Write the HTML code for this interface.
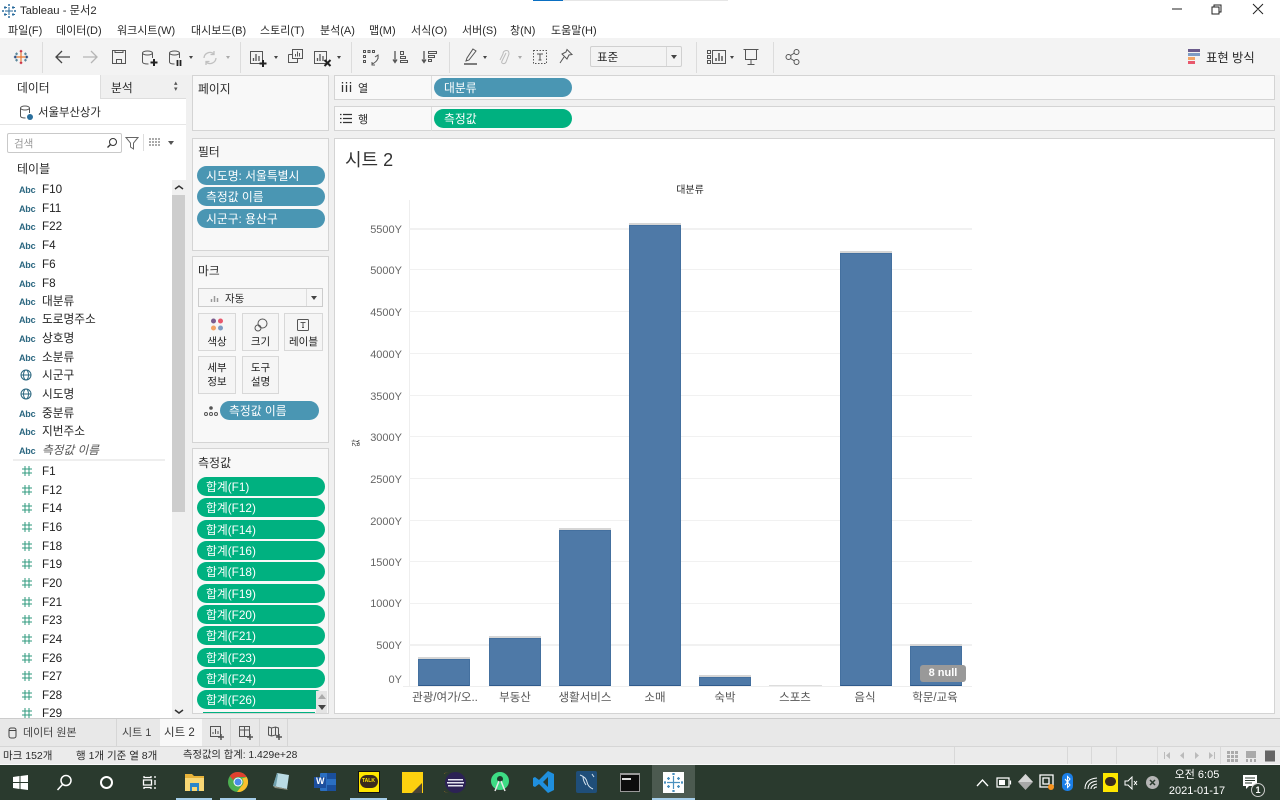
<!DOCTYPE html>
<html lang="ko"><head><meta charset="utf-8"><title>Tableau - 문서2</title>
<style>
html,body{margin:0;padding:0;width:1280px;height:800px;overflow:hidden;background:#f0f0f0;font-family:"Liberation Sans","Noto Sans CJK KR","NanumGothic",sans-serif;font-size:11px;color:#2a2a2a}
.b,.t,.p,svg.i{position:absolute}
.t{white-space:nowrap;line-height:14px;margin-top:1px}
.c{border:1px solid #d4d4d4;box-sizing:border-box;position:absolute}
.p{height:19px;border-radius:10px;color:#fff;line-height:20px;padding-left:9px;box-sizing:border-box;white-space:nowrap;font-size:11.8px}
.bl{background:#4a96b3}.gr{background:#00b180}
.f{left:42px;font-size:11.7px;color:#222}
.a{left:19px;font-size:9px;font-weight:bold;color:#2b6780;letter-spacing:-.2px}
.mb{position:absolute;background:#f5f5f5;border:1px solid #d8d8d8;box-sizing:border-box;text-align:center;font-size:10.5px;line-height:14px;color:#222}
.y{right:878px;font-size:11px;color:#666}
.x{width:70px;text-align:center;font-size:11.5px;color:#555;top:690px}
.gl{position:absolute;left:409px;width:563px;height:1px;background:#f1f1f1}
.bar{position:absolute;width:52px;background:#4e79a7;border:1px solid #44709f;border-bottom-color:#2f5a8c;box-sizing:border-box;box-shadow:0 -2px 0 #d6d6d6}
svg.i{fill:none;stroke:#555;stroke-width:1}
svg.hs{left:21px;stroke:#2f9a7e}
.sp{position:absolute;top:42px;width:1px;height:31px;background:#dcdcdc}
.car{position:absolute;width:0;height:0;border-left:2.5px solid transparent;border-right:2.5px solid transparent;border-top:3px solid #444}
.hd{font-size:11.8px}
</style></head><body>

<!-- title -->
<div class="b" style="left:0;top:0;width:1280px;height:38px;background:#fff"></div>
<div class="b" style="left:533px;top:0;width:30px;height:1px;background:#0a6fc2"></div>
<div class="b" style="left:563px;top:0;width:165px;height:1px;background:#e6e6e6"></div>
<svg class="i" style="left:2px;top:4px;stroke:#2a6b9c" width="14" height="14"><path d="M7 3v8M3 7h8M7 0v2M6 1h2M7 12v2M6 13h2M0 7h2M1 6v2M12 7h2M13 6v2M3 2v3M2 3.500h3M11 2v3M10 3.500h3M3 9v3M2 10.500h3M11 9v3M10 10.500h3"/></svg>
<div class="t" style="left:20px;top:3px;font-size:11.3px">Tableau - 문서2</div>
<svg class="i" style="left:1170px;top:0;stroke:#222" width="104" height="18"><path d="M2 9h10M42 7h7v7h-7zM44 7V5h7v7h-2M83 4l10 10M93 4L83 14"/></svg>
<div class="t" style="left:8px;top:23px">파일(F)</div>
<div class="t" style="left:56px;top:23px">데이터(D)</div>
<div class="t" style="left:117px;top:23px">워크시트(W)</div>
<div class="t" style="left:191px;top:23px">대시보드(B)</div>
<div class="t" style="left:260px;top:23px">스토리(T)</div>
<div class="t" style="left:320px;top:23px">분석(A)</div>
<div class="t" style="left:369px;top:23px">맵(M)</div>
<div class="t" style="left:411px;top:23px">서식(O)</div>
<div class="t" style="left:462px;top:23px">서버(S)</div>
<div class="t" style="left:510px;top:23px">창(N)</div>
<div class="t" style="left:551px;top:23px">도움말(H)</div>

<!-- toolbar -->
<div class="b" style="left:0;top:38px;width:1280px;height:37px;background:#f3f3f3"></div>
<svg class="i" style="left:13px;top:49px;stroke-width:1.300" width="16" height="16" viewBox="0 0 18 18"><path d="M9 4v10M4 9h10" stroke="#e8762c"/><path d="M9 1v3M7.500 2.500h3M9 14v3M7.500 15.500h3" stroke="#c72035"/><path d="M1 9h3M2.500 7.500v3M14 9h3M15.500 7.500v3" stroke="#1f447a"/><path d="M4 4v3M2.500 5.500h3M14 4v3M12.500 5.500h3M4 11v3M2.500 12.500h3M14 11v3M12.500 12.500h3" stroke="#5b879b"/></svg>
<div class="sp" style="left:42px"></div><div class="sp" style="left:240px"></div><div class="sp" style="left:351px"></div><div class="sp" style="left:449px"></div><div class="sp" style="left:696px"></div><div class="sp" style="left:773px"></div>
<svg class="i" style="left:55px;top:50px;stroke-width:1.300;stroke:#444" width="15" height="14"><path d="M15 7H1M7 1L1 7l6 6"/></svg>
<svg class="i" style="left:83px;top:50px;stroke-width:1.300;stroke:#b5b5b5" width="15" height="14"><path d="M0 7h14M8 1l6 6-6 6"/></svg>
<svg class="i" style="left:112px;top:50px" width="15" height="15"><path d="M.5.500h13v13H.5zM3 .5v2h8v-2M4.500 13.500v-4h5v4"/></svg>
<svg class="i" style="left:141px;top:50px" width="17" height="17"><ellipse cx="6.500" cy="3" rx="5" ry="2"/><path d="M1.500 3v9q0 2 6 2M11.500 3v5"/><path d="M13 9v7M9.500 12.500h7" stroke="#222" stroke-width="2"/></svg>
<svg class="i" style="left:168px;top:50px" width="15" height="17"><ellipse cx="6.500" cy="3" rx="5" ry="2"/><path d="M1.500 3v9q0 2 5 2M11.500 3v5"/><path d="M9.500 10v6M12.500 10v6" stroke="#222" stroke-width="1.800"/></svg>
<div class="car" style="left:189px;top:56px"></div>
<svg class="i" style="left:202px;top:50px;stroke:#c0c0c0;stroke-width:1.300" width="16" height="16"><path d="M2 8a6 6 0 0 1 10-4M14 8a6 6 0 0 1-10 4M12 1v3.500H8.500M4 15v-3.500h3.500"/></svg>
<div class="car" style="left:226px;top:56px;border-top-color:#aaa"></div>
<svg class="i" style="left:250px;top:50px" width="18" height="17"><path d="M.5 1.500h12v12H.5z"/><path d="M3.500 11V8M6 11V4M9 11V6" stroke-width="1.300"/><path d="M13 10v7M9.500 13.500h7" stroke="#222" stroke-width="2"/></svg>
<div class="car" style="left:274px;top:56px"></div>
<svg class="i" style="left:288px;top:49px" width="15" height="15"><path d="M4.500.5h10v9h-10zM.5 5.500h4M.5 5.500v8h9v-4"/><path d="M7.500 7.500V5M9.500 7.500V2.500M11.500 7.500V4"/></svg>
<svg class="i" style="left:314px;top:50px" width="18" height="17"><path d="M.5 1.500h12v12H.5z"/><path d="M3.500 11V8M6 11V4M9 11V6" stroke-width="1.300"/><path d="M10.500 10l6 6M16.500 10l-6 6" stroke="#222" stroke-width="2"/></svg>
<div class="car" style="left:337px;top:56px"></div>
<svg class="i" style="left:363px;top:50px" width="17" height="16"><path d="M.5.500h2v2h-2zM5 .5h2v2H5zM9.500.5h2v2h-2zM.5 5.500h2v2h-2zM.5 10.500h2v2h-2zM15 5q1 6-6 9M15 9V5l-3 2M9 12v3h3"/></svg>
<svg class="i" style="left:392px;top:50px" width="17" height="15"><path d="M3 1v11M1 9.500l2 3 2-3" stroke-width="1.300"/><path d="M8.500 1.500h3v3h-3zM8.500 6.500h5v2h-5zM8.500 10.500h7v2h-7z"/></svg>
<svg class="i" style="left:421px;top:50px" width="17" height="15"><path d="M3 1v11M1 9.500l2 3 2-3" stroke-width="1.300"/><path d="M7.500 1.500h8v2h-8zM7.500 5.500h6v2h-6zM7.500 9.500h3v2h-3z"/></svg>
<svg class="i" style="left:463px;top:48px" width="15" height="18"><path d="M10 1l3 2-7 9-3 1 1-3z"/><path d="M1 16h13" stroke-width="1.500"/></svg>
<div class="car" style="left:483px;top:56px"></div>
<svg class="i" style="left:497px;top:49px;stroke:#bbb" width="13" height="16"><path d="M9 4L5 12q-1 2 1 2.500t3-1.500l3-8q0-4-3-3.500T6 5L3 11"/></svg>
<div class="car" style="left:518px;top:56px;border-top-color:#aaa"></div>
<svg class="i" style="left:532px;top:49px" width="16" height="16"><path d="M1.500 1.500h13v13h-13z" stroke-dasharray="1.500 1.500"/><path d="M5 5h6M8 5v6M6.500 11h3"/></svg>
<svg class="i" style="left:558px;top:48px" width="16" height="17"><path d="M9 1.500l5 5-3 .5-2 4-5-5 4-2zM6 9l-4 6"/></svg>
<div class="b" style="left:590px;top:46px;width:92px;height:21px;background:#f3f3f3;border:1px solid #d0d0d0;box-sizing:border-box;border-radius:2px"></div>
<div class="b" style="left:666px;top:47px;width:1px;height:19px;background:#d8d8d8"></div>
<div class="car" style="left:671px;top:55px;border-left-width:3.500px;border-right-width:3.500px;border-top-width:4px"></div>
<div class="t" style="left:597px;top:50px;font-size:11.500px">표준</div>
<svg class="i" style="left:707px;top:49px" width="20" height="16"><path d="M.5 1.500h3v3h-3zM.5 6.500h3v3h-3zM.5 11.500h3v3h-3zM5.500 1.500h13v13h-13z"/><path d="M9 12V9M12 12V4M15 12V7" stroke-width="1.500"/></svg>
<div class="car" style="left:730px;top:56px"></div>
<svg class="i" style="left:743px;top:48px" width="16" height="18"><path d="M.5 1.500h15M2.500 1.500v10h11v-10M8 11.500V16M4.500 16.500h7"/></svg>
<svg class="i" style="left:785px;top:49px" width="15" height="16"><circle cx="3.500" cy="8" r="2.500"/><circle cx="11.500" cy="3" r="2.500"/><circle cx="11.500" cy="13" r="2.500"/><path d="M5.500 6.500l4-2.500M5.500 9.500l4 2.500"/></svg>
<div class="b" style="left:1188px;top:49px;width:12px;height:3px;background:#6b5b8c"></div>
<div class="b" style="left:1188px;top:53px;width:12px;height:3px;background:#7e9cc4"></div>
<div class="b" style="left:1188px;top:57px;width:7px;height:3px;background:#f2a365"></div>
<div class="b" style="left:1188px;top:61px;width:7px;height:3px;background:#e8586c"></div>
<div class="t" style="left:1206px;top:50px;font-size:12.300px">표현 방식</div>

<!-- left panel -->
<div class="b" style="left:0;top:75px;width:186px;height:644px;background:#fff"></div>
<div class="b" style="left:100px;top:75px;width:86px;height:24px;background:#f0f0f0;border-left:1px solid #ddd;border-bottom:1px solid #ddd;box-sizing:border-box"></div>
<div class="t hd" style="left:17px;top:80px">데이터</div>
<div class="t hd" style="left:111px;top:80px">분석</div>
<div class="t" style="left:174px;top:79px;font-size:7px;line-height:8px;color:#555">▴</div>
<div class="t" style="left:174px;top:85px;font-size:7px;line-height:8px;color:#555">▾</div>
<svg class="i" style="left:19px;top:105px;stroke:#555" width="15" height="16"><ellipse cx="6" cy="3" rx="4.500" ry="2"/><path d="M1.500 3v8q0 2 5 2M10.500 3v5"/><circle cx="11" cy="12" r="3" fill="#2b6f9c" stroke="none"/></svg>
<div class="t" style="left:38px;top:105px;font-size:11.400px">서울부산상가</div>
<div class="b" style="left:0;top:124px;width:186px;height:1px;background:#e6e6e6"></div>
<div class="b" style="left:7px;top:133px;width:115px;height:20px;border:1px solid #c9c9c9;border-radius:2px;box-sizing:border-box;background:#fff"></div>
<div class="t" style="left:14px;top:136px;color:#999;font-size:10.500px">검색</div>
<svg class="i" style="left:106px;top:137px;stroke:#333" width="12" height="12"><circle cx="7" cy="5" r="3.500"/><path d="M4.500 7.500L1.500 10.500" stroke-width="1.300"/></svg>
<svg class="i" style="left:125px;top:136px;stroke:#666" width="14" height="14"><path d="M1 1.500h12L8.500 7v6l-3-2V7z"/></svg>
<div class="b" style="left:143px;top:134px;width:1px;height:17px;background:#ddd"></div>
<svg class="i" style="left:149px;top:138px;stroke:#555" width="12" height="9"><path d="M0 1h11M0 4h11M0 7h11" stroke-dasharray="2 1"/></svg>
<div class="car" style="left:168px;top:141px;border-left-width:3px;border-right-width:3px;border-top-width:4px;border-top-color:#555"></div>
<div class="t" style="left:17px;top:161px;font-size:12px">테이블</div>

<div class="b" style="left:172px;top:180px;width:14px;height:539px;background:#f0f0f0"></div>
<div class="b" style="left:172px;top:195px;width:13px;height:317px;background:#cdcdcd"></div>
<svg class="i" style="left:174px;top:184px;stroke:#333;stroke-width:1.500" width="10" height="7"><path d="M1 5l4-3 4 3"/></svg>
<svg class="i" style="left:174px;top:708px;stroke:#333;stroke-width:1.500" width="10" height="7"><path d="M1 2l4 3 4-3"/></svg>

<div class="t a" style="top:182px">Abc</div><div class="t f" style="top:182px">F10</div>
<div class="t a" style="top:201px">Abc</div><div class="t f" style="top:201px">F11</div>
<div class="t a" style="top:219px">Abc</div><div class="t f" style="top:219px">F22</div>
<div class="t a" style="top:238px">Abc</div><div class="t f" style="top:238px">F4</div>
<div class="t a" style="top:257px">Abc</div><div class="t f" style="top:257px">F6</div>
<div class="t a" style="top:276px">Abc</div><div class="t f" style="top:276px">F8</div>
<div class="t a" style="top:294px">Abc</div><div class="t f" style="top:294px">대분류</div>
<div class="t a" style="top:312px">Abc</div><div class="t f" style="top:312px">도로명주소</div>
<div class="t a" style="top:331px">Abc</div><div class="t f" style="top:331px">상호명</div>
<div class="t a" style="top:350px">Abc</div><div class="t f" style="top:350px">소분류</div>
<svg class="i" style="left:20px;top:369px;stroke:#2b6780" width="12" height="12"><circle cx="6" cy="6" r="5"/><ellipse cx="6" cy="6" rx="2.500" ry="5"/><path d="M1 6h10"/></svg><div class="t f" style="top:368px">시군구</div>
<svg class="i" style="left:20px;top:388px;stroke:#2b6780" width="12" height="12"><circle cx="6" cy="6" r="5"/><ellipse cx="6" cy="6" rx="2.500" ry="5"/><path d="M1 6h10"/></svg><div class="t f" style="top:387px">시도명</div>
<div class="t a" style="top:406px">Abc</div><div class="t f" style="top:406px">중분류</div>
<div class="t a" style="top:424px">Abc</div><div class="t f" style="top:424px">지번주소</div>
<div class="t a" style="top:443px">Abc</div><div class="t f" style="top:443px;font-style:italic;color:#555">측정값 이름</div>
<div class="b" style="left:13px;top:459px;width:152px;height:2px;background:#eee"></div>
<svg class="i hs" style="top:465px" width="12" height="12"><path d="M4 1v10M8 1v10M1 4h10M1 8h10"/></svg><div class="t f" style="top:464px">F1</div>
<svg class="i hs" style="top:484px" width="12" height="12"><path d="M4 1v10M8 1v10M1 4h10M1 8h10"/></svg><div class="t f" style="top:483px">F12</div>
<svg class="i hs" style="top:502px" width="12" height="12"><path d="M4 1v10M8 1v10M1 4h10M1 8h10"/></svg><div class="t f" style="top:501px">F14</div>
<svg class="i hs" style="top:521px" width="12" height="12"><path d="M4 1v10M8 1v10M1 4h10M1 8h10"/></svg><div class="t f" style="top:520px">F16</div>
<svg class="i hs" style="top:540px" width="12" height="12"><path d="M4 1v10M8 1v10M1 4h10M1 8h10"/></svg><div class="t f" style="top:539px">F18</div>
<svg class="i hs" style="top:558px" width="12" height="12"><path d="M4 1v10M8 1v10M1 4h10M1 8h10"/></svg><div class="t f" style="top:557px">F19</div>
<svg class="i hs" style="top:577px" width="12" height="12"><path d="M4 1v10M8 1v10M1 4h10M1 8h10"/></svg><div class="t f" style="top:576px">F20</div>
<svg class="i hs" style="top:596px" width="12" height="12"><path d="M4 1v10M8 1v10M1 4h10M1 8h10"/></svg><div class="t f" style="top:595px">F21</div>
<svg class="i hs" style="top:614px" width="12" height="12"><path d="M4 1v10M8 1v10M1 4h10M1 8h10"/></svg><div class="t f" style="top:613px">F23</div>
<svg class="i hs" style="top:633px" width="12" height="12"><path d="M4 1v10M8 1v10M1 4h10M1 8h10"/></svg><div class="t f" style="top:632px">F24</div>
<svg class="i hs" style="top:652px" width="12" height="12"><path d="M4 1v10M8 1v10M1 4h10M1 8h10"/></svg><div class="t f" style="top:651px">F26</div>
<svg class="i hs" style="top:670px" width="12" height="12"><path d="M4 1v10M8 1v10M1 4h10M1 8h10"/></svg><div class="t f" style="top:669px">F27</div>
<svg class="i hs" style="top:689px" width="12" height="12"><path d="M4 1v10M8 1v10M1 4h10M1 8h10"/></svg><div class="t f" style="top:688px">F28</div>
<svg class="i hs" style="top:707px" width="12" height="12"><path d="M4 1v10M8 1v10M1 4h10M1 8h10"/></svg><div class="t f" style="top:706px">F29</div>

<!-- cards -->
<div class="c" style="left:192px;top:75px;width:137px;height:56px;background:#f8f8f8"></div>
<div class="t hd" style="left:198px;top:81px">페이지</div>
<div class="c" style="left:334px;top:75px;width:941px;height:25px;background:#f9f9f9"></div>
<div class="c" style="left:334px;top:106px;width:941px;height:25px;background:#f9f9f9"></div>
<div class="b" style="left:431px;top:76px;width:1px;height:24px;background:#ddd"></div>
<div class="b" style="left:431px;top:107px;width:1px;height:24px;background:#ddd"></div>
<svg class="i" style="left:341px;top:82px;stroke:#333;stroke-width:1.300" width="11" height="11"><path d="M1.500 3v7M5.500 3v7M9.500 3v7M1.500 0v1.500M5.500 0v1.500M9.500 0v1.500"/></svg>
<div class="t" style="left:358px;top:81px">열</div>
<svg class="i" style="left:340px;top:113px;stroke:#333;stroke-width:1.300" width="12" height="11"><path d="M0 1.500h1.500M3 1.500h9M0 5.500h1.500M3 5.500h9M0 9.500h1.500M3 9.500h9"/></svg>
<div class="t" style="left:358px;top:112px">행</div>
<div class="p bl" style="left:434px;top:78px;width:138px;padding-left:10px">대분류</div>
<div class="p gr" style="left:434px;top:109px;width:138px;padding-left:10px">측정값</div>

<div class="c" style="left:192px;top:138px;width:137px;height:113px;background:#f8f8f8"></div>
<div class="t hd" style="left:198px;top:144px">필터</div>
<div class="p bl" style="left:197px;top:166px;width:128px">시도명: 서울특별시</div>
<div class="p bl" style="left:197px;top:187px;width:128px">측정값 이름</div>
<div class="p bl" style="left:197px;top:209px;width:128px">시군구: 용산구</div>

<div class="c" style="left:192px;top:256px;width:137px;height:187px;background:#f8f8f8"></div>
<div class="t hd" style="left:198px;top:263px">마크</div>
<div class="b" style="left:198px;top:288px;width:125px;height:19px;background:#f6f6f6;border:1px solid #ccc;box-sizing:border-box"></div>
<div class="b" style="left:306px;top:289px;width:1px;height:17px;background:#ddd"></div>
<div class="car" style="left:311px;top:296px;border-left-width:3px;border-right-width:3px;border-top-width:4px"></div>
<svg class="i" style="left:210px;top:293px;stroke:#999" width="10" height="10"><path d="M1.500 9V6M4.500 9V3M7.500 9V5" stroke-width="1.500"/></svg>
<div class="t" style="left:225px;top:291px;font-size:10.500px">자동</div>
<div class="mb" style="left:198px;top:313px;width:38px;height:38px;padding-top:21px">색상</div>
<div class="mb" style="left:242px;top:313px;width:37px;height:38px;padding-top:21px">크기</div>
<div class="mb" style="left:284px;top:313px;width:39px;height:38px;padding-top:21px">레이블</div>
<div class="mb" style="left:198px;top:356px;width:38px;height:38px;padding-top:4px">세부<br>정보</div>
<div class="mb" style="left:242px;top:356px;width:37px;height:38px;padding-top:4px">도구<br>설명</div>
<svg class="i" style="left:210px;top:318px;stroke:none" width="14" height="14"><circle cx="3.500" cy="3" r="2.500" fill="#7b5d8e"/><circle cx="10.500" cy="3" r="2.500" fill="#e8586c"/><circle cx="3.500" cy="10" r="2.500" fill="#f2a365"/><circle cx="10.500" cy="10" r="2.500" fill="#7e9cc4"/></svg>
<svg class="i" style="left:254px;top:318px" width="14" height="14"><circle cx="8.500" cy="5.500" r="4.500"/><circle cx="4" cy="10" r="3"/></svg>
<svg class="i" style="left:297px;top:319px" width="12" height="12"><rect x=".5" y=".5" width="11" height="11" rx="1"/><path d="M3.500 3.500h5M6 3.500v5M5 8.500h2"/></svg>
<svg class="i" style="left:204px;top:406px;stroke:#555" width="14" height="11"><circle cx="7" cy="2" r="1.300" fill="#555"/><circle cx="2" cy="8" r="1.500"/><circle cx="7" cy="8" r="1.500"/><circle cx="12" cy="8" r="1.500"/></svg>
<div class="p bl" style="left:220px;top:401px;width:99px">측정값 이름</div>

<div class="c" style="left:192px;top:448px;width:137px;height:266px;background:#f8f8f8"></div>
<div class="t" style="left:198px;top:455px;font-size:12px">측정값</div>
<div class="p gr" style="left:197px;top:477px;width:128px">합계(F1)</div>
<div class="p gr" style="left:197px;top:498px;width:128px">합계(F12)</div>
<div class="p gr" style="left:197px;top:520px;width:128px">합계(F14)</div>
<div class="p gr" style="left:197px;top:541px;width:128px">합계(F16)</div>
<div class="p gr" style="left:197px;top:562px;width:128px">합계(F18)</div>
<div class="p gr" style="left:197px;top:584px;width:128px">합계(F19)</div>
<div class="p gr" style="left:197px;top:605px;width:128px">합계(F20)</div>
<div class="p gr" style="left:197px;top:626px;width:128px">합계(F21)</div>
<div class="p gr" style="left:197px;top:648px;width:128px">합계(F23)</div>
<div class="p gr" style="left:197px;top:669px;width:128px">합계(F24)</div>
<div class="p gr" style="left:197px;top:690px;width:128px">합계(F26)</div>
<div class="b" style="left:203px;top:712px;width:112px;height:1px;background:#00b180"></div>
<div class="b" style="left:316px;top:691px;width:11px;height:22px;background:#e4e4e4"></div>
<div class="b" style="left:318px;top:694px;width:0;height:0;border-left:4px solid transparent;border-right:4px solid transparent;border-bottom:5px solid #aaa"></div>
<div class="b" style="left:318px;top:705px;width:0;height:0;border-left:4px solid transparent;border-right:4px solid transparent;border-top:5px solid #444"></div>

<!-- chart -->
<div class="c" style="left:334px;top:138px;width:941px;height:576px;background:#fff"></div>
<div class="t" style="left:345px;top:149px;font-size:18px;line-height:20px;color:#333">시트 2</div>
<div class="t" style="left:660px;top:184px;width:60px;text-align:center;font-size:10px;line-height:12px">대분류</div>
<div class="b" style="left:409px;top:200px;width:1px;height:486px;background:#eee"></div>
<div class="gl" style="top:228px;height:2px"></div><div class="gl" style="top:269px"></div><div class="gl" style="top:311px"></div><div class="gl" style="top:353px"></div><div class="gl" style="top:395px"></div><div class="gl" style="top:436px"></div><div class="gl" style="top:478px"></div><div class="gl" style="top:520px"></div><div class="gl" style="top:561px"></div><div class="gl" style="top:603px"></div><div class="gl" style="top:644px;height:2px"></div>
<div class="b" style="left:403px;top:686px;width:569px;height:1px;background:#eee"></div>
<div class="t y" style="top:222px">5500Y</div><div class="t y" style="top:263px">5000Y</div><div class="t y" style="top:305px">4500Y</div><div class="t y" style="top:347px">4000Y</div><div class="t y" style="top:389px">3500Y</div><div class="t y" style="top:430px">3000Y</div><div class="t y" style="top:472px">2500Y</div><div class="t y" style="top:514px">2000Y</div><div class="t y" style="top:555px">1500Y</div><div class="t y" style="top:596px">1000Y</div><div class="t y" style="top:638px">500Y</div><div class="t y" style="top:672px">0Y</div>
<div class="t" style="left:353px;top:436px;font-size:8px;line-height:12px;transform:rotate(-90deg);color:#333">값</div>
<div class="bar" style="left:418px;top:659px;height:27px"></div>
<div class="bar" style="left:489px;top:638px;height:48px"></div>
<div class="bar" style="left:559px;top:530px;height:156px"></div>
<div class="bar" style="left:629px;top:225px;height:461px"></div>
<div class="bar" style="left:699px;top:677px;height:9px"></div>
<div class="b" style="left:769px;top:685px;width:53px;height:1px;background:#ddd"></div>
<div class="bar" style="left:840px;top:253px;height:433px"></div>
<div class="bar" style="left:910px;top:646px;height:40px"></div>
<div class="t x" style="left:410px">관광/여가/오..</div><div class="t x" style="left:480px">부동산</div><div class="t x" style="left:550px">생활서비스</div><div class="t x" style="left:620px">소매</div><div class="t x" style="left:690px">숙박</div><div class="t x" style="left:760px">스포츠</div><div class="t x" style="left:830px">음식</div><div class="t x" style="left:900px">학문/교육</div>
<div class="b" style="left:920px;top:665px;width:46px;height:17px;background:#999;border-radius:3px;color:#fff;font-weight:bold;font-size:11px;line-height:17px;text-align:center">8 null</div>

<!-- tabs -->
<div class="b" style="left:0;top:718px;width:1280px;height:1px;background:#ccc"></div>
<div class="b" style="left:0;top:719px;width:1280px;height:27px;background:#e8e8e8"></div>
<svg class="i" style="left:8px;top:727px;stroke:#444" width="9" height="12"><rect x="1" y="1" width="7" height="10" rx="2"/><path d="M1 3.500h7"/></svg>
<div class="t" style="left:23px;top:725px;color:#444">데이터 원본</div>
<div class="b" style="left:116px;top:719px;width:1px;height:27px;background:#d6d6d6"></div>
<div class="t" style="left:122px;top:725px;color:#444">시트 1</div>
<div class="b" style="left:160px;top:719px;width:42px;height:27px;background:#f8f8f8"></div>
<div class="t" style="left:164px;top:725px;color:#333;font-size:11.500px">시트 2</div>
<div class="b" style="left:230px;top:719px;width:1px;height:27px;background:#d6d6d6"></div>
<div class="b" style="left:259px;top:719px;width:1px;height:27px;background:#d6d6d6"></div>
<div class="b" style="left:287px;top:719px;width:1px;height:27px;background:#d6d6d6"></div>
<svg class="i" style="left:210px;top:726px" width="15" height="15"><path d="M.5.500h10v10H.5z"/><path d="M3 8V6M5.500 8V3M8 8V5"/><path d="M11 8v6M8 11h6" stroke-width="1.500"/></svg>
<svg class="i" style="left:239px;top:726px" width="15" height="15"><path d="M.5.500h10v10H.5zM.5 4h10M5.500.500v10"/><path d="M11 8v6M8 11h6" stroke-width="1.500"/></svg>
<svg class="i" style="left:268px;top:726px" width="15" height="15"><path d="M.5 1l3 1 4-1 3 1v8l-3-1-4 1-3-1zM3.500 2v8M7.500 1v8"/><path d="M11 8v6M8 11h6" stroke-width="1.500"/></svg>

<!-- status -->
<div class="b" style="left:0;top:746px;width:1280px;height:1px;background:#d6d6d6"></div>
<div class="b" style="left:0;top:747px;width:1280px;height:18px;background:#ebebeb"></div>
<div class="t" style="left:3px;top:748px;font-size:10.500px">마크 152개</div>
<div class="t" style="left:76px;top:748px;font-size:10.500px">행 1개 기준 열 8개</div>
<div class="t" style="left:183px;top:748px;font-size:10.300px">측정값의 합계: 1.429e+28</div>
<div class="b" style="left:954px;top:747px;width:1px;height:18px;background:#d8d8d8"></div>
<div class="b" style="left:1067px;top:747px;width:1px;height:18px;background:#d8d8d8"></div>
<div class="b" style="left:1091px;top:747px;width:1px;height:18px;background:#d8d8d8"></div>
<div class="b" style="left:1116px;top:747px;width:1px;height:18px;background:#d8d8d8"></div>
<div class="b" style="left:1157px;top:747px;width:1px;height:18px;background:#d8d8d8"></div>
<div class="b" style="left:1220px;top:747px;width:1px;height:18px;background:#d8d8d8"></div>
<svg class="i" style="left:1163px;top:751px;stroke:none;fill:#bbb" width="54" height="10"><path d="M1 1h1v7H1zM7 1v7L3 4.500zM21 1v7l-4-3.500zM32 1l4 3.500L32 8zM46 1l4 3.500L46 8zM51 1h1v7h-1z"/></svg>
<svg class="i" style="left:1226px;top:749px;stroke:none;fill:#aaa" width="50" height="14"><path d="M1 2h3v3H1zM5 2h3v3H5zM9 2h3v3H9zM1 6h3v3H1zM5 6h3v3H5zM9 6h3v3H9zM1 10h3v3H1zM5 10h3v3H5zM9 10h3v3H9zM20 2h10v7H20zM20 10h2v3h-2zM24 10h2v3h-2zM28 10h2v3h-2z"/><path d="M39 1.500h10v11H39z" fill="#666"/></svg>

<!-- taskbar -->
<div class="b" style="left:0;top:764px;width:1280px;height:1px;background:#fafafa"></div>
<div class="b" style="left:0;top:765px;width:1280px;height:35px;background:#2a3a2e"></div>
<div class="b" style="left:652px;top:765px;width:43px;height:35px;background:#4c5a50"></div>
<div class="b" style="left:176px;top:798px;width:36px;height:2px;background:#a5cde8"></div>
<div class="b" style="left:220px;top:798px;width:36px;height:2px;background:#a5cde8"></div>
<div class="b" style="left:350px;top:798px;width:37px;height:2px;background:#a5cde8"></div>
<div class="b" style="left:652px;top:798px;width:43px;height:2px;background:#a5cde8"></div>
<svg class="i" style="left:13px;top:775px;stroke:none;fill:#fff" width="15" height="15"><path d="M0 2l6.500-1v6H0zM7.500 1L15 0v7H7.500zM0 8h6.500v6L0 13zM7.500 8H15v7l-7.500-1z"/></svg>
<svg class="i" style="left:56px;top:774px;stroke:#fff;stroke-width:1.500" width="17" height="17"><circle cx="10" cy="6.500" r="5"/><path d="M6.500 10.500L1.500 16"/></svg>
<svg class="i" style="left:99px;top:775px;stroke:#fff;stroke-width:2" width="15" height="15"><circle cx="7.500" cy="7.500" r="5.500"/></svg>
<svg class="i" style="left:141px;top:775px;stroke:#fff;stroke-width:1.300" width="16" height="15"><path d="M3 1v1.500h7V1M3 14v-1.500h7V14M2.500 5h8v5h-8zM14 1v2M14 5v5M14 12v2"/></svg>
<svg class="i" style="left:185px;top:774px;stroke:none" width="19" height="17"><path d="M0 0h7l2 2h10v15H0z" fill="#e8b33a"/><path d="M0 4h19v13H0z" fill="#f8d775"/><path d="M5 9h9v8h-2v-4H7v4H5z" fill="#2a85c9"/></svg>
<svg class="i" style="left:228px;top:772px;stroke:none" width="20" height="20"><circle cx="10" cy="10" r="10" fill="#4caf50"/><path d="M10 0a10 10 0 0 1 8.700 5H10a5 5 0 0 0-4.700 3.200L1.800 4A10 10 0 0 1 10 0z" fill="#e0402f"/><path d="M18.700 5A10 10 0 0 1 9 20l4.500-6A5 5 0 0 0 14 6.500z" fill="#fbc02d"/><circle cx="10" cy="10" r="4.500" fill="#fff"/><circle cx="10" cy="10" r="3.500" fill="#4a8de8"/></svg>
<svg class="i" style="left:271px;top:772px;stroke:none" width="20" height="20"><path d="M6 1l12 2-2 14L2 14z" fill="#b9dbe4"/><path d="M2 14l4-13 1 1-2 12z" fill="#6fa0ad"/><path d="M2 14l14 3 1 1-13-2z" fill="#8a8a7a"/></svg>
<svg class="i" style="left:314px;top:772px;stroke:none" width="22" height="20"><rect x="6" y="1" width="16" height="18" rx="1" fill="#2b6fc2"/><path d="M13 1h9v6h-9zM13 13h9v6h-9z" fill="#1a4f9c"/><rect y="5" width="12" height="11" fill="#1d4f9e"/></svg>
<div class="t" style="left:316px;top:771px;font-size:9px;font-weight:bold;color:#fff;line-height:18px">W</div>
<div class="b" style="left:358px;top:771px;width:22px;height:22px;background:#ffe600;border:1px solid #111;box-sizing:border-box"></div>
<div class="b" style="left:360px;top:775px;width:18px;height:13px;background:#3a2a1e;border-radius:7px"></div>
<div class="t" style="left:362px;top:776px;font-size:5px;line-height:8px;font-weight:bold;color:#ffe600">TALK</div>
<div class="b" style="left:402px;top:772px;width:21px;height:21px;background:#fdd10f"></div>
<svg class="i" style="left:412px;top:783px;stroke:none;fill:#4a4436" width="11" height="10"><path d="M10 0v10H0z"/></svg>
<svg class="i" style="left:444px;top:772px;stroke:none" width="23" height="21"><circle cx="11.500" cy="10.500" r="10.500" fill="#2c2255"/><path d="M6 0a10.500 10.500 0 0 0 0 21A11.500 10.500 0 0 1 6 0z" fill="#f7941e"/><path d="M4 7h15v1.500H4zM3 10h17v1.500H3zM4 13h15v1.500H4z" fill="#e5e5f0"/></svg>
<svg class="i" style="left:491px;top:772px;stroke:none" width="18" height="21"><circle cx="9" cy="9" r="9" fill="#3ddc84"/><circle cx="9" cy="7" r="3" fill="#1c3a2a"/><path d="M8 9L4 19M10 9l4 10" stroke="#e8e8e8" stroke-width="1.500"/></svg>
<svg class="i" style="left:533px;top:771px;stroke:none" width="21" height="22"><path d="M15 0l6 3v16l-6 3-9-9-4 3-2-1V7l2-1 4 3zM15 6l-5 5 5 5z" fill="#1f8fde"/></svg>
<div class="b" style="left:576px;top:771px;width:21px;height:22px;background:#1f4e79;border-radius:2px"></div>
<svg class="i" style="left:578px;top:773px;stroke:#d5e3ee" width="17" height="18"><path d="M2 2q6 2 7 7t6 7M5 3q0 5 3 9M14 1l2 3"/></svg>
<div class="b" style="left:620px;top:773px;width:20px;height:19px;background:#0c0c0c;border:1px solid #999;border-top-width:2px;box-sizing:border-box"></div>
<div class="b" style="left:622px;top:778px;width:9px;height:2px;background:#ddd"></div>
<div class="b" style="left:663px;top:772px;width:21px;height:21px;background:#fff"></div>
<svg class="i" style="left:664px;top:773px;stroke:#4a90bf;stroke-width:1.200" width="19" height="19"><path d="M9.500 3v13M3 9.500h13M9.500 0v2M8 1h3M9.500 17v2M8 18h3M0 9.500h2M1 8v3M17 9.500h2M18 8v3M4.500 4v3M3 5.500h3M14.500 4v3M13 5.500h3M4.500 12v3M3 13.500h3M14.500 12v3M13 13.500h3"/></svg>

<svg class="i" style="left:976px;top:778px;stroke:#fff;stroke-width:1.300" width="13" height="10"><path d="M1 8l5.500-6L12 8"/></svg>
<svg class="i" style="left:996px;top:777px;stroke:#fff;stroke-width:1.200" width="16" height="11"><path d="M1 1h12v9H1zM14.500 3.500v4"/><path d="M3 3h6v5H3z" fill="#fff" stroke="none"/></svg>
<svg class="i" style="left:1018px;top:774px;stroke:none" width="15" height="16"><path d="M7.500 0L15 8l-7.500 8L0 8z" fill="#a9a9a9"/><path d="M7.500 0L15 8H0z" fill="#d6d6d6"/></svg>
<svg class="i" style="left:1039px;top:774px;stroke:#fff;stroke-width:1.300" width="16" height="16"><path d="M1 1h13v12H1zM4 4h6v6H4z"/><circle cx="12" cy="13" r="3" fill="#f7941e" stroke="none"/></svg>
<svg class="i" style="left:1062px;top:773px;stroke:#fff" width="11" height="18"><rect x="0" y="0" width="11" height="18" rx="5" fill="#1b7fe8" stroke="none"/><path d="M3 6l5 6-2.500 2.500v-11L8 6l-5 6"/></svg>
<svg class="i" style="left:1084px;top:777px;stroke:#fff" width="14" height="13"><path d="M1 12Q1 2 13 1M4 12q0-7 9-8M7 12q0-4 6-5M10 12q0-2 3-2"/></svg>
<div class="b" style="left:1103px;top:773px;width:15px;height:19px;background:#ffe600"></div>
<div class="b" style="left:1105px;top:777px;width:11px;height:9px;background:#3a2a1e;border-radius:5px"></div>
<svg class="i" style="left:1124px;top:776px;stroke:#fff" width="14" height="14"><path d="M1 5h3l4-4v12l-4-4H1zM10 5l3 4M13 5l-3 4"/></svg>
<svg class="i" style="left:1146px;top:776px;stroke:#2a3a2e;stroke-width:1.500" width="13" height="13"><circle cx="6.500" cy="6.500" r="6.500" fill="#b5b5b5" stroke="none"/><path d="M4 4l5 5M9 4l-5 5"/></svg>
<div class="t" style="left:1157px;top:767px;width:80px;text-align:center;color:#fff;font-size:11px">오전 6:05</div>
<div class="t" style="left:1157px;top:783px;width:80px;text-align:center;color:#fff;font-size:11px">2021-01-17</div>
<svg class="i" style="left:1243px;top:775px;stroke:#2a3a2e" width="14" height="14"><path d="M0 0h14v11H6l-3 3v-3H0z" fill="#fff" stroke="none"/><path d="M2 3h10M2 5.500h10M2 8h7"/></svg>
<div class="b" style="left:1251px;top:783px;width:14px;height:14px;border:1px solid #ccc;border-radius:50%;box-sizing:border-box;background:#2a3a2e;color:#fff;font-size:9px;line-height:12px;text-align:center;font-weight:bold">1</div>
</body></html>
